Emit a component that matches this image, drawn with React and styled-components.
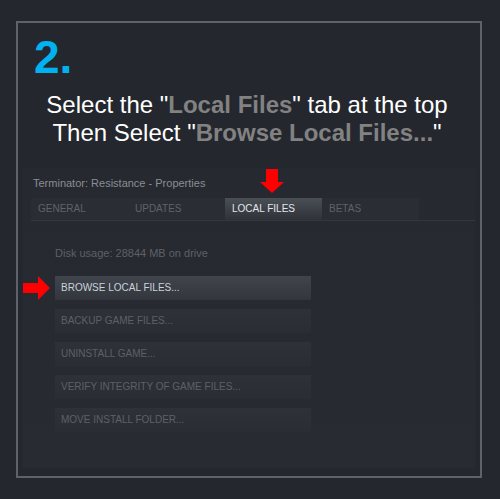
import React from "react";
import styled, { createGlobalStyle } from "styled-components";

const GlobalStyle = createGlobalStyle`
  html, body { margin: 0; padding: 0; background: #24272e; }
  body { font-family: "Liberation Sans", Arial, sans-serif; }
  * { box-sizing: border-box; }
`;

const Page = styled.div`
  width: 500px;
  height: 499px;
  padding: 21px 0 0 16px;
  background: #24272e;
  overflow: hidden;
`;

const Frame = styled.div`
  width: 466px;
  height: 457px;
  border: 2px solid #5e636a;
  padding-top: 11px;
`;

const StepNumber = styled.div`
  margin-left: 16px;
  font-size: 46px;
  line-height: 46px;
  font-weight: bold;
  color: #00b3f0;
`;

const Instructions = styled.div`
  margin-top: 11px;
  padding-right: 4px;
  text-align: center;
  font-size: 24px;
  line-height: 28px;
  color: #ffffff;
`;

const Highlight = styled.b`
  color: #828282;
`;

const PropertiesWindow = styled.div`
  position: relative;
  margin: 21px 0 0 4px;
  width: 454px;
  height: 301px;
  border: 1px solid #1f2a35;
  background: linear-gradient(180deg, #262930 0%, #282b31 100%);
`;

const WindowTitle = styled.div`
  height: 29px;
  line-height: 29px;
  padding-left: 10px;
  font-size: 11px;
  color: #8a8e94;
`;

const TabBar = styled.div`
  display: flex;
  margin-left: 8px;
  border-bottom: 1px solid #33373e;
`;

const Tab = styled.div`
  flex: 0 0 97px;
  height: 22px;
  line-height: 22px;
  padding-left: 7px;
  font-size: 10px;
  color: ${(p) => (p.$active ? "#e2e6ea" : "#5f6369")};
  background: ${(p) =>
    p.$active
      ? "linear-gradient(180deg, #4a4f56 0%, #2f3238 100%)"
      : "#2a2d33"};
`;

const Content = styled.div`
  padding: 25px 0 0 32px;
`;

const DiskUsage = styled.div`
  height: 14px;
  line-height: 14px;
  font-size: 11px;
  color: #5d6167;
`;

const ButtonList = styled.div`
  display: flex;
  flex-direction: column;
  gap: 9px;
  margin-top: 16px;
`;

const ActionButton = styled.div`
  width: 256px;
  height: 24px;
  line-height: 24px;
  padding-left: 6px;
  font-size: 10px;
  color: ${(p) => (p.$active ? "#c9d3dc" : "#5d6167")};
  background: ${(p) =>
    p.$active
      ? "linear-gradient(180deg, #40444c 0%, #33363d 100%)"
      : "linear-gradient(180deg, #2e3137 0%, #2a2d33 100%)"};
`;

const Arrow = styled.svg`
  position: absolute;
  left: ${(p) => p.$left}px;
  top: ${(p) => p.$top}px;
`;

export default function App() {
  const tabs = ["GENERAL", "UPDATES", "LOCAL FILES", "BETAS"];
  const buttons = [
    "BROWSE LOCAL FILES...",
    "BACKUP GAME FILES...",
    "UNINSTALL GAME...",
    "VERIFY INTEGRITY OF GAME FILES...",
    "MOVE INSTALL FOLDER...",
  ];
  return (
    <Page>
      <GlobalStyle />
      <Frame>
        <StepNumber>2.</StepNumber>
        <Instructions>
          Select the "<Highlight>Local Files</Highlight>" tab at the top
          <br />
          Then Select "<Highlight>Browse Local Files...</Highlight>"
        </Instructions>
        <PropertiesWindow>
          <WindowTitle>Terminator: Resistance - Properties</WindowTitle>
          <TabBar>
            {tabs.map((t) => (
              <Tab key={t} $active={t === "LOCAL FILES"}>
                {t}
              </Tab>
            ))}
          </TabBar>
          <Content>
            <DiskUsage>Disk usage: 28844 MB on drive</DiskUsage>
            <ButtonList>
              {buttons.map((b, i) => (
                <ActionButton key={b} $active={i === 0}>
                  {b}
                </ActionButton>
              ))}
            </ButtonList>
          </Content>
          <Arrow $left={237} $top={0} width="24" height="24" viewBox="0 0 24 24">
            <polygon points="6,0 18,0 18,13 24,13 12,24 0,13 6,13" fill="#ff0000" />
          </Arrow>
          <Arrow $left={0} $top={107} width="27" height="24" viewBox="0 0 27 24">
            <polygon points="0,7 15,7 15,0 27,12 15,24 15,17 0,17" fill="#ff0000" />
          </Arrow>
        </PropertiesWindow>
      </Frame>
    </Page>
  );
}
